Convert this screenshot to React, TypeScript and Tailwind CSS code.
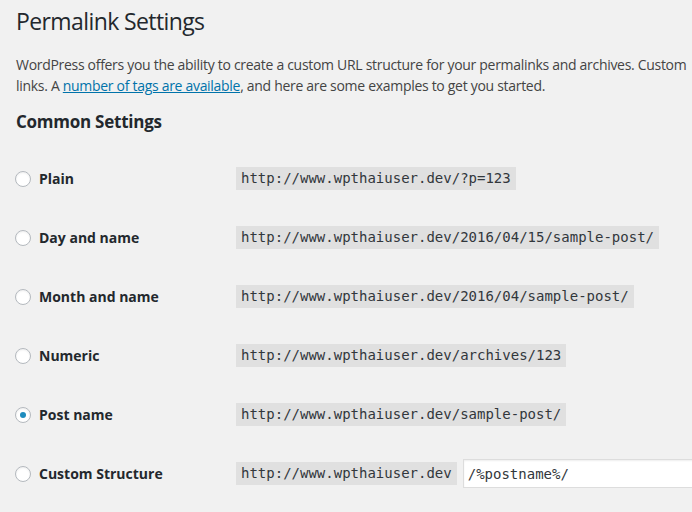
const rows = [
  { label: 'Plain', url: 'http://www.wpthaiuser.dev/?p=123' },
  { label: 'Day and name', url: 'http://www.wpthaiuser.dev/2016/04/15/sample-post/' },
  { label: 'Month and name', url: 'http://www.wpthaiuser.dev/2016/04/sample-post/' },
  { label: 'Numeric', url: 'http://www.wpthaiuser.dev/archives/123' },
  { label: 'Post name', url: 'http://www.wpthaiuser.dev/sample-post/', checked: true },
];

function Radio({ checked }: { checked?: boolean }) {
  return (
    <span className="flex h-4 w-4 shrink-0 items-center justify-center rounded-full border border-[#b4b9be] bg-white shadow-[inset_0_1px_2px_rgba(0,0,0,0.07)]">
      {checked && <span className="h-[6px] w-[6px] rounded-full bg-[#1e8cbe]" />}
    </span>
  );
}

function Code({ children }: { children: React.ReactNode }) {
  return (
    <code className="whitespace-nowrap bg-[rgba(0,0,0,0.07)] px-[5px] py-[2px] font-['DejaVu_Sans_Mono',monospace] text-[14px] leading-[19px] text-[#32373c]">
      {children}
    </code>
  );
}

function Row({
  label,
  checked,
  children,
}: {
  label: string;
  checked?: boolean;
  children: React.ReactNode;
}) {
  return (
    <div className="flex h-[59px] items-center">
      <label className="-ml-[1px] flex w-[221px] shrink-0 items-center gap-[8px] text-[14px] font-bold text-[#23282d]">
        <Radio checked={checked} />
        {label}
      </label>
      <div className="flex items-center gap-[6px]">{children}</div>
    </div>
  );
}

export default function App() {
  return (
    <div className="h-[512px] w-[692px] overflow-hidden bg-[#f1f1f1] pl-[16px] font-['Open_Sans',sans-serif] text-[#444]">
      <h1 className="pt-[7px] text-[23px] font-normal leading-[29px] tracking-[-0.6px] text-[#23282d]">
        Permalink Settings
      </h1>
      <p className="mt-[18px] whitespace-nowrap text-[14px] leading-[21px] tracking-[-0.3px]">
        WordPress offers you the ability to create a custom URL structure for your permalinks and archives. Custom
        <br />
        links. A{' '}
        <a href="#" className="text-[#0073aa] underline">
          number of tags are available
        </a>
        , and here are some examples to get you started.
      </p>
      <h2 className="mt-[15px] text-[17px] font-bold leading-[22px] tracking-[-0.25px] text-[#23282d]">
        Common Settings
      </h2>
      <div className="mt-[16px]">
        {rows.map((r) => (
          <Row key={r.label} label={r.label} checked={r.checked}>
            <Code>{r.url}</Code>
          </Row>
        ))}
        <Row label="Custom Structure">
          <Code>http://www.wpthaiuser.dev</Code>
          <input
            readOnly
            value="/%postname%/"
            className="h-[29px] w-[260px] border border-[#ddd] bg-white px-[4px] font-['DejaVu_Sans_Mono',monospace] text-[14px] text-[#32373c] shadow-[inset_0_1px_2px_rgba(0,0,0,0.07)] outline-none"
          />
        </Row>
      </div>
    </div>
  );
}
